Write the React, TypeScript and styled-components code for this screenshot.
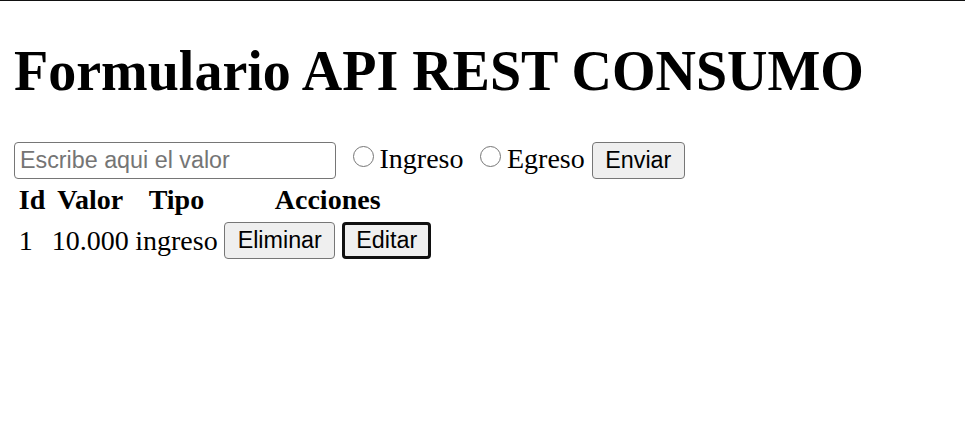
import React from "react";
import styled, { createGlobalStyle } from "styled-components";

const Global = createGlobalStyle`
  html, body { margin: 0; padding: 0; background: #fff; }
  body { font-family: "Liberation Serif", "Times New Roman", serif; font-size: 28px; color: #000; }
`;

const TopRule = styled.div`
  height: 1px;
  background: #111;
`;

const Page = styled.div`
  padding: 0 14px;
`;

const Title = styled.h1`
  margin: 38px 0 39px;
  font-size: 56px;
  line-height: 64px;
  font-weight: 700;
`;

const Form = styled.form`
  display: flex;
  align-items: center;
  height: 37px;
`;

const TextInput = styled.input`
  box-sizing: border-box;
  width: 322px;
  height: 37px;
  margin: 0;
  padding: 1.75px 5px;
  border: 1.5px solid #767676;
  border-radius: 4px;
  font-family: "Liberation Sans", Arial, sans-serif;
  font-size: 23.3px;
  color: #000;
  &::placeholder { color: #757575; }
`;

const Radio = styled.span<{ $ml: number }>`
  box-sizing: border-box;
  display: inline-block;
  width: 21px;
  height: 21px;
  border: 1.75px solid #767676;
  border-radius: 50%;
  background: #fff;
  margin: 0 5.5px 0 ${(p) => p.$ml}px;
  position: relative;
  top: -4px;
`;

const Label = styled.span`
  line-height: 32px;
  position: relative;
  top: -2px;
`;

const Button = styled.button<{ $focused?: boolean; $ml: number }>`
  box-sizing: border-box;
  height: 37px;
  margin: 0 0 0 ${(p) => p.$ml}px;
  padding: 0 ${(p) => (p.$focused ? 11 : 12.5)}px;
  border: ${(p) => (p.$focused ? "3px solid #101010" : "1.5px solid #767676")};
  border-radius: 4px;
  background: #efefef;
  font-family: "Liberation Sans", Arial, sans-serif;
  font-size: 23.3px;
  color: #000;
  line-height: 1;
`;

const Table = styled.table`
  border-collapse: separate;
  border-spacing: 3.5px;
`;

const Th = styled.th`
  padding: 1.75px;
  font-weight: 700;
  text-align: center;
  line-height: 32px;
`;

const Td = styled.td`
  padding: 1.75px;
  line-height: 32px;
  white-space: nowrap;
`;

export default function App() {
  return (
    <>
      <Global />
      <TopRule />
      <Page>
        <Title>Formulario API REST CONSUMO</Title>
        <Form onSubmit={(e) => e.preventDefault()}>
          <TextInput placeholder="Escribe aqui el valor" />
          <Radio $ml={17} />
          <Label>Ingreso</Label>
          <Radio $ml={17} />
          <Label>Egreso</Label>
          <Button $ml={7}>Enviar</Button>
        </Form>
        <Table>
          <thead>
            <tr>
              <Th>Id</Th>
              <Th>Valor</Th>
              <Th>Tipo</Th>
              <Th>Acciones</Th>
            </tr>
          </thead>
          <tbody>
            <tr>
              <Td>1</Td>
              <Td>10.000</Td>
              <Td>ingreso</Td>
              <Td>
                <Button $ml={0}>Eliminar</Button>
                <Button $ml={7} $focused>Editar</Button>
              </Td>
            </tr>
          </tbody>
        </Table>
      </Page>
    </>
  );
}
